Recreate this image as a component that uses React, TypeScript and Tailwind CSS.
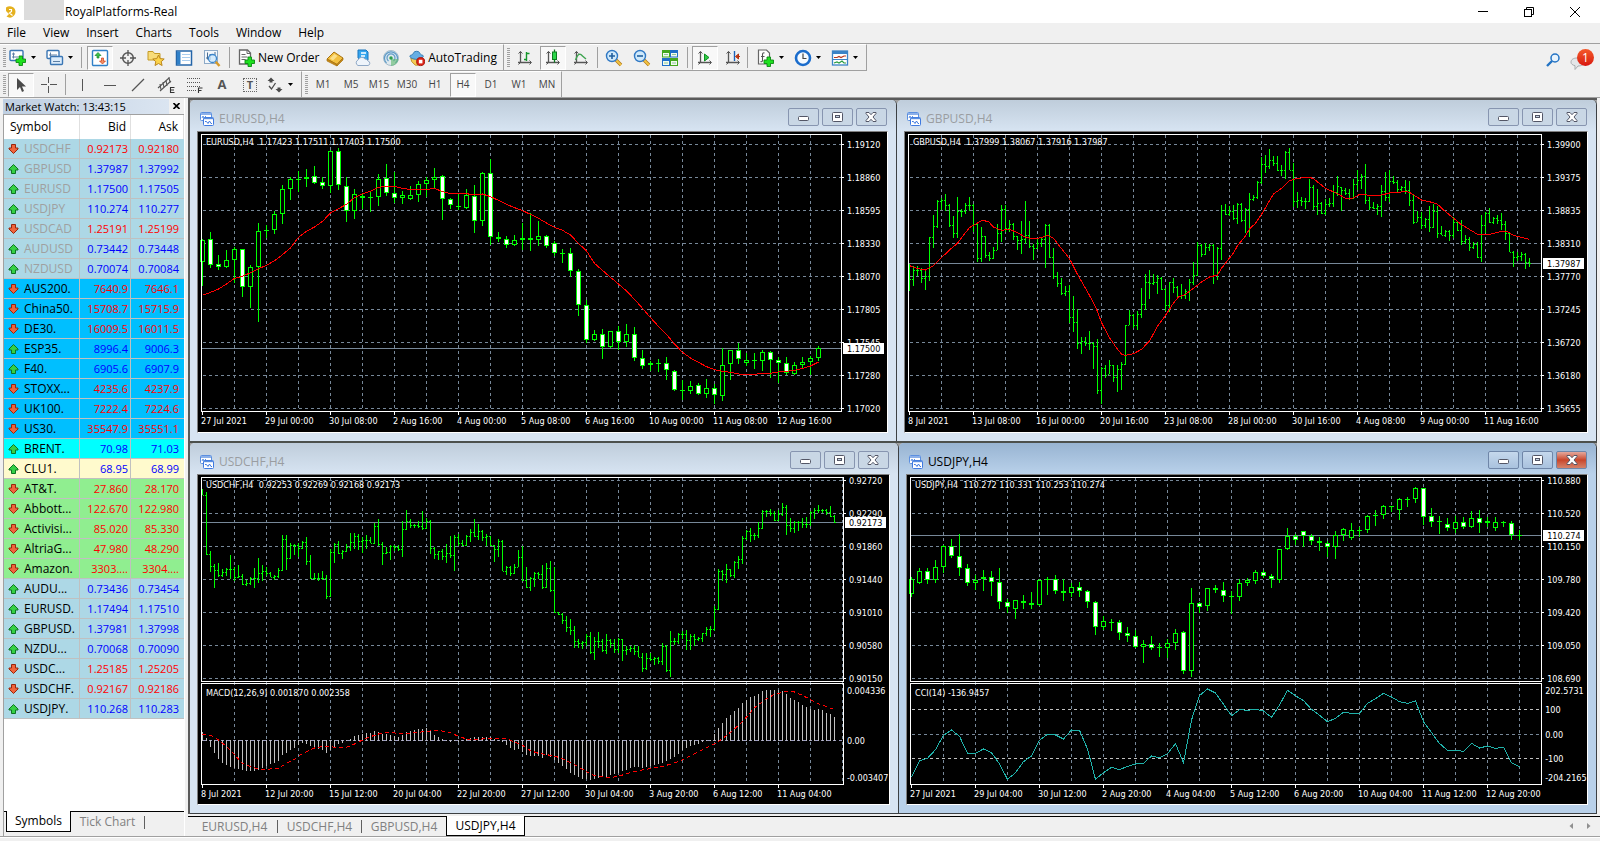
import { ReactNode } from "react";
import clsx from "clsx";

/* ---------- market watch ---------- */

type Quote = [symbol: string, bid: string, ask: string, up: boolean, group: string];

const GROUPS: Record<string, string> = {
  major: "bg-[#add8e6] text-[#a0a0a0]",
  index: "bg-[#00bfff] text-black",
  brent: "bg-[#00ffff] text-black",
  crude: "bg-[#fffacd] text-black",
  stock: "bg-[#90ee90] text-black",
  forex: "bg-[#add8e6] text-black",
};

const QUOTES: Quote[] = [
  ["USDCHF", "0.92173", "0.92180", false, "major"],
  ["GBPUSD", "1.37987", "1.37992", true, "major"],
  ["EURUSD", "1.17500", "1.17505", true, "major"],
  ["USDJPY", "110.274", "110.277", true, "major"],
  ["USDCAD", "1.25191", "1.25199", false, "major"],
  ["AUDUSD", "0.73442", "0.73448", true, "major"],
  ["NZDUSD", "0.70074", "0.70084", true, "major"],
  ["AUS200.", "7640.9", "7646.1", false, "index"],
  ["China50.", "15708.7", "15715.9", false, "index"],
  ["DE30.", "16009.5", "16011.5", false, "index"],
  ["ESP35.", "8996.4", "9006.3", true, "index"],
  ["F40.", "6905.6", "6907.9", true, "index"],
  ["STOXX...", "4235.6", "4237.9", false, "index"],
  ["UK100.", "7222.4", "7224.6", false, "index"],
  ["US30.", "35547.9", "35551.1", false, "index"],
  ["BRENT.", "70.98", "71.03", true, "brent"],
  ["CLU1.", "68.95", "68.99", true, "crude"],
  ["AT&T.", "27.860", "28.170", false, "stock"],
  ["Abbott...", "122.670", "122.980", false, "stock"],
  ["Activisi...", "85.020", "85.330", false, "stock"],
  ["AltriaG...", "47.980", "48.290", false, "stock"],
  ["Amazon.", "3303....", "3304....", false, "stock"],
  ["AUDU...", "0.73436", "0.73454", true, "forex"],
  ["EURUSD.", "1.17494", "1.17510", true, "forex"],
  ["GBPUSD.", "1.37981", "1.37998", true, "forex"],
  ["NZDU...", "0.70068", "0.70090", true, "forex"],
  ["USDC...", "1.25185", "1.25205", false, "forex"],
  ["USDCHF.", "0.92167", "0.92186", false, "forex"],
  ["USDJPY.", "110.268", "110.283", true, "forex"],
];

/* ---------- chart data ---------- */
// All levels run downwards, three units to one pixel.

const nums = (s: string) => s.trim().split(/[\s,]+/).map(Number);

const chunk = (list: number[], size: number) => {
  const out: number[][] = [];
  for (let i = 0; i < list.length; i += size) out.push(list.slice(i, i + size));
  return out;
};

// high, body top, body bottom, low, bearish
const EURUSD = chunk(nums(`
432 437 503 570 0, 413 433 512 516 1, 480 508 518 524 1, 467 496 518 518 0, 456 463 496 563 0, 463 463 578 603 1,
510 516 578 636 0, 384 409 518 678 0, 391 406 409 428 1, 348 358 407 416 0, 270 283 358 384 0, 248 253 283 312 0,
228 253 256 288 0, 222 247 253 273 0, 215 244 266 266 1, 248 262 275 280 1, 165 169 274 291 0, 159 169 272 282 1,
247 274 350 378 1, 282 298 350 369 0, 299 304 311 340 1, 293 307 310 350 0, 237 253 307 330 0, 207 250 296 302 1,
231 294 311 321 1, 288 300 311 325 0, 273 300 314 314 0, 259 268 302 318 0, 247 256 268 304 0, 219 247 257 277 0,
240 244 314 372 1, 310 313 331 341 1, 298 333 338 344 1, 284 300 341 341 0, 270 303 380 413 1, 231 235 380 391 0,
193 235 428 447 1, 411 427 433 438 1, 423 433 452 456 1, 422 436 452 452 0, 384 430 437 462 0, 354 430 437 467 1,
378 424 437 452 0, 420 424 453 458 1, 438 445 476 482 1, 464 474 477 503 0, 459 475 530 545 1, 522 529 632 662 1,
616 631 737 741 1, 705 718 737 737 0, 702 718 758 791 1, 709 709 758 758 0, 694 709 742 762 1, 687 718 742 753 0,
696 718 791 796 1, 766 790 814 819 1, 799 804 811 826 0, 793 804 807 829 0, 786 804 827 852 1, 827 829 887 887 1,
856 886 889 912 0, 858 874 890 896 0, 864 871 899 899 1, 852 880 899 906 0, 868 880 902 926 1, 759 811 903 917 0,
766 766 808 852 0, 744 766 794 806 1, 776 796 806 812 0, 774 796 799 819 0, 766 772 799 825 0, 768 771 796 846 1,
787 796 806 861 1, 786 804 834 837 1, 801 811 838 838 0, 786 801 812 817 0, 784 789 802 837 0, 753 760 789 797 0`), 5);

const EURUSD_MA = nums(`
601 592 582 567 550 544 533 521 511 497 479 459 427 409 396 379 354 341 328 308 296 289 277 274 274 280 284 283 284
280 290 296 296 296 300 297 305 316 328 338 347 358 370 384 397 406 420 445 468 505 526 547 567 588 613 640 668 694
718 747 772 789 802 815 824 829 832 837 839 838 835 835 831 829 826 820 813 801`).map((v, i) => [i * 24, v]);

const USDJPY = chunk(nums(`
411 419 464 470 0, 384 394 431 431 0, 384 394 422 431 1, 361 382 422 428 0, 317 320 382 397 0, 297 318 350 353 1,
283 348 385 405 1, 372 385 431 437 1, 405 422 431 447 0, 391 411 418 450 0, 394 411 428 467 1, 385 428 487 505 1,
477 488 503 517 1, 480 482 507 534 0, 465 484 490 506 1, 458 489 497 505 1, 417 422 496 496 0, 413 418 421 462 0,
405 418 455 460 1, 419 454 461 482 1, 430 443 461 470 0, 428 443 455 470 1, 450 454 488 503 1, 484 487 563 582 1,
528 544 563 568 0, 537 547 550 572 0, 540 546 581 597 1, 563 580 590 605 1, 572 589 623 623 1, 601 612 623 666 0,
588 614 624 629 1, 611 622 625 648 0, 598 611 626 653 0, 567 580 611 627 0, 573 577 695 699 1, 446 490 694 708 0,
487 490 503 516 1, 445 445 500 510 0, 435 445 452 458 1, 426 451 470 485 1, 455 468 471 520 0, 419 430 472 480 0,
415 422 430 436 0, 390 397 424 431 0, 390 397 410 412 1, 403 409 418 443 1, 327 328 422 428 0, 264 290 328 328 0,
284 290 302 313 1, 273 275 290 319 1, 284 289 305 312 1, 293 304 311 332 1, 304 310 322 350 1, 275 287 322 354 0,
264 269 287 301 0, 250 271 295 297 0, 262 270 273 290 0, 226 229 272 276 0, 211 226 229 255 0, 196 200 227 236 0,
198 199 202 215 0, 174 178 212 239 0, 173 177 180 198 0, 142 145 178 188 0, 144 145 233 254 1, 205 229 247 258 1,
230 243 246 279 0, 236 252 266 272 1, 230 247 268 277 0, 232 247 263 266 1, 215 235 263 263 0, 210 235 251 276 1,
232 245 251 260 1, 233 247 266 271 0, 243 247 250 260 0, 245 250 286 298 1, 270 285 288 297 0`), 5);

const USDJPY_CCI = nums(`
1010 962 955 929 886 870 889 940 940 927 938 972 1018 998 965 948 901 883 885 897 870 871 927 1018 998 982 989 979
972 970 948 953 941 911 968 840 767 747 759 793 827 809 811 808 813 832 795 751 767 782 808 826 845 835 817 820 820
790 776 760 771 785 790 783 845 878 910 931 931 934 910 924 918 925 922 968 980`).map((v, i) => [i * 24, v]);

// high, low, close
const GBPUSD = chunk(nums(`
508 590 552, 514 575 527, 514 545 527, 520 566 550, 523 587 545, 427 558 428, 360 461 394, 316 400 319, 311 345 316,
297 350 331, 328 398 391, 365 431 416, 306 430 350, 342 368 349, 324 359 330, 306 350 331, 327 412 388, 386 503 490,
397 501 423, 423 489 482, 472 500 490, 456 494 466, 388 467 415, 331 441 344, 330 413 400, 375 412 388, 384 435 425,
423 465 436, 380 479 433, 318 447 420, 378 461 454, 449 495 461, 433 463 444, 428 458 432, 388 521 391, 389 489 486,
461 554 545, 532 578 566, 549 600 595, 573 603 588, 572 686 667, 603 711 682, 643 762 746, 726 777 740, 727 753 744,
709 766 744, 743 824 753, 732 899 886, 816 929 820, 811 851 840, 795 837 810, 811 863 848, 810 893 822, 801 885 808,
690 811 690, 645 692 660, 657 700 691, 650 707 657, 579 671 628, 537 645 562, 525 614 564, 539 572 562, 540 597 549,
547 586 582, 579 648 632, 561 653 563, 551 596 578, 573 610 604, 568 614 602, 584 614 590, 552 620 562, 501 572 541,
441 545 452, 449 487 477, 445 480 457, 449 470 452, 448 567 542, 458 555 461, 330 497 345, 328 362 358, 333 364 348,
331 375 370, 325 389 328, 325 382 376, 339 416 344, 294 426 312, 300 320 307, 258 312 262, 186 267 208, 180 235 215,
162 222 195, 183 213 206, 184 230 226, 210 243 227, 168 254 171, 159 227 226, 204 338 318, 291 341 315, 306 333 318,
309 344 320, 254 323 277, 270 345 335, 282 362 325, 322 357 354, 314 360 327, 309 338 325, 270 338 292, 243 305 275,
276 350 287, 281 301 294, 282 317 310, 254 312 267, 226 286 256, 237 284 244, 207 329 317, 307 345 338, 321 344 340,
327 360 333, 270 368 290, 231 320 306, 225 321 260, 243 269 261, 255 292 283, 273 293 278, 255 297 286, 258 333 315,
300 389 381, 350 382 367, 352 402 391, 369 400 373, 333 411 396, 327 400 348, 335 429 416, 393 421 420, 405 426 408,
405 438 421, 366 431 382, 379 408 405, 375 452 440, 420 447 432, 426 468 458, 442 464 449, 443 491 488, 360 501 391,
351 414 355, 339 386 382, 367 387 370, 362 388 375, 354 405 387, 378 435 415, 414 473 472, 468 516 488, 473 500 485,
472 498 478, 474 522 501, 489 518 505`), 3);

const GBPUSD_MA = chunk(nums(`
0 512, 24 521, 48 525, 72 512, 96 488, 120 465, 144 445, 156 428, 180 398, 204 384, 219 376, 237 380, 252 396,
276 406, 300 403, 324 413, 348 427, 372 432, 396 428, 414 421, 432 430, 456 461, 480 491, 504 538, 528 580, 552 623,
564 650, 576 683, 600 728, 624 763, 637 778, 648 781, 672 776, 696 763, 720 738, 744 694, 768 661, 792 624, 807 606,
828 598, 852 580, 876 561, 900 546, 924 540, 936 520, 960 489, 972 474, 984 452, 1008 423, 1020 402, 1038 385,
1056 358, 1092 297, 1116 280, 1140 257, 1164 250, 1200 247, 1212 251, 1248 280, 1284 296, 1310 311, 1330 310,
1352 297, 1380 301, 1416 300, 1440 294, 1488 290, 1500 292, 1536 315, 1572 323, 1584 328, 1608 350, 1656 389,
1704 418, 1746 417, 1776 409, 1794 410, 1812 421, 1860 433`), 2);

const USDCHF = chunk(nums(`
147 165 165, 158 347 343, 333 396 379, 372 444 392, 369 411 406, 389 411 398, 384 408 387, 345 417 388, 381 424 412,
375 416 409, 403 437 433, 421 440 430, 411 435 415, 386 446 415, 354 430 401, 375 424 393, 381 409 401, 397 413 411,
405 422 410, 386 414 391, 285 394 298, 285 390 355, 309 358 316, 314 345 315, 309 353 325, 303 329 307, 291 376 363,
345 417 415, 401 422 415, 399 425 415, 393 421 415, 406 479 469, 327 473 337, 309 371 313, 303 343 339, 330 359 334,
312 336 322, 279 334 307, 281 327 289, 283 331 305, 291 341 300, 285 328 302, 293 310 309, 249 313 259, 237 319 313,
306 375 340, 321 343 337, 316 362 320, 316 334 321, 315 333 328, 243 353 267, 210 271 245, 237 265 256, 253 264 257,
244 266 259, 213 272 265, 235 269 243, 240 344 325, 321 359 342, 333 360 335, 329 360 348, 313 371 340, 288 355 345,
285 393 292, 283 319 310, 301 320 316, 286 319 289, 267 308 277, 237 292 290, 253 302 275, 272 305 293, 282 320 290,
288 320 317, 315 368 327, 299 352 304, 302 395 393, 380 406 383, 380 409 400, 374 403 382, 330 383 352, 318 425 421,
383 446 443, 411 453 415, 396 443 400, 396 419 403, 375 447 443, 369 445 385, 363 456 451, 381 520 518, 517 526 522,
519 552 540, 530 577 563, 537 585 571, 560 624 604, 597 625 610, 603 629 606, 582 619 590, 576 642 637, 591 662 604,
576 624 605, 599 638 631, 584 642 600, 597 624 611, 599 640 629, 594 640 599, 597 665 630, 618 645 629, 618 636 625,
615 645 635, 618 653 651, 640 698 685, 639 692 655, 641 664 657, 652 676 655, 653 674 663, 609 676 618, 615 696 690,
573 711 604, 595 615 604, 579 614 582, 573 599 583, 570 630 600, 582 632 588, 582 619 598, 591 604 595, 579 608 580,
561 588 568, 558 593 569, 498 573 508, 387 512 393, 390 424 403, 372 431 388, 387 411 407, 363 416 366, 348 387 358,
288 373 295, 270 300 275, 264 307 285, 279 302 286, 246 295 265, 210 269 213, 211 232 213, 208 228 219, 213 244 240,
210 243 222, 189 229 203, 195 285 256, 236 278 266, 243 279 247, 244 273 246, 236 264 252, 231 266 252, 213 260 218,
204 237 211, 195 220 211, 207 220 211, 208 225 218, 198 233 229, 226 249 247`), 3);

const MACD = nums(`
877 896 918 936 954 966 972 978 983 986 989 992 992 990 988 981 976 971 968 962 944 938 929 922 913 906 909 915 922
926 929 938 928 918 911 907 902 897 889 885 882 880 879 873 877 884 884 887 889 891 886 878 875 872 869 867 866 872
886 893 899 901 905 901 903 901 898 896 893 892 891 891 893 899 901 904 913 921 927 926 933 943 947 946 945 951 944
950 957 968 976 986 996 1004 1010 1015 1016 1017 1015 1012 1009 1008 1003 1000 996 991 987 983 980 980 983 980 977
974 970 967 962 956 950 941 929 921 917 914 910 905 902 901 884 864 849 834 825 814 806 791 780 773 768 764 755 750
750 750 752 754 764 774 781 788 795 803 807 810 809 812 820 822 831`);

const MACD_SIGNAL = chunk(nums(`
0 883, 24 886, 48 900, 60 910, 72 919, 96 944, 120 970, 144 980, 168 987, 192 988, 228 985, 252 970, 276 958,
288 948, 312 935, 336 924, 360 920, 384 920, 408 923, 432 922, 456 912, 480 900, 504 890, 528 882, 552 878, 576 879,
624 880, 672 874, 708 871, 744 878, 768 889, 792 897, 816 899, 852 896, 876 894, 912 895, 936 906, 960 916, 984 932,
1008 940, 1032 944, 1056 948, 1080 956, 1104 968, 1128 981, 1152 995, 1176 1007, 1200 1011, 1224 1013, 1248 1009,
1272 1001, 1308 992, 1344 986, 1380 979, 1410 971, 1440 959, 1476 941, 1524 917, 1548 905, 1584 877, 1620 845,
1656 803, 1692 776, 1716 763, 1752 754, 1776 756, 1800 766, 1824 779, 1848 791, 1896 809`), 2);

/* ---------- chart ---------- */

const LEFT = 4;
const GRID = "#778899";
const LIME = "#00ff00";

const py = (v: number, shift: number) => Math.floor(v / 3) - shift;

const Candles = ({ data, shift }: { data: number[][]; shift: number }) => (
  <g>
    {data.map(([high, top, bottom, low, bear], i) => {
      const x = LEFT + i * 8;
      const t = py(top, shift);
      const h = py(bottom, shift) - t;
      return (
        <g key={i}>
          <rect x={x} y={py(high, shift)} width={1} height={py(low, shift) - py(high, shift) + 1} fill={LIME} />
          <rect x={x - 2} y={t} width={5} height={Math.max(h, 1)} fill={LIME} />
          {h > 2 && <rect x={x - 1} y={t + 1} width={3} height={h - 2} fill={bear ? "#fff" : "#000"} />}
        </g>
      );
    })}
  </g>
);

const Bars = ({ data, shift }: { data: number[][]; shift: number }) => (
  <g fill={LIME}>
    {data.map(([high, low, close], i) => {
      const x = LEFT + i * 4;
      const open = i ? data[i - 1][2] : close;
      const clamped = Math.min(Math.max(open, high), low);
      return (
        <g key={i}>
          <rect x={x} y={py(high, shift)} width={1} height={Math.max(py(low, shift) - py(high, shift), 2)} />
          <rect x={x - 1} y={py(clamped, shift)} width={1} height={1} />
          <rect x={x + 1} y={py(close, shift)} width={1} height={1} />
        </g>
      );
    })}
  </g>
);

interface CurveProps {
  data: number[][];
  shift: number;
  color: string;
  dash?: string;
}

const Curve = ({ data, shift, color, dash }: CurveProps) => (
  <polyline
    points={data.map(([x, y]) => `${LEFT + 0.5 + x / 3},${y / 3 - shift}`).join(" ")}
    fill="none"
    stroke={color}
    strokeWidth={1}
    strokeDasharray={dash}
  />
);

const Histogram = ({ data, zero, shift }: { data: number[]; zero: number; shift: number }) => (
  <g fill="#c0c0c0">
    {data.map((v, i) => {
      const y = py(v, shift);
      return <rect key={i} x={LEFT + i * 4} y={Math.min(y, zero)} width={1} height={Math.abs(y - zero) + 1} />;
    })}
  </g>
);

interface ChartProps {
  caption: string;
  prices: string[];
  firstPrice: number;
  times: string[];
  bid: string;
  bidY: number;
  bottom: number;
  split?: number;
  subCaption?: string;
  subLabels?: [string, number][];
  levels?: [number, string][];
  children: ReactNode;
}

const Chart = (props: ChartProps) => {
  const { caption, prices, firstPrice, times, bid, bidY, bottom, split, subCaption } = props;
  const { subLabels = [], levels = [], children } = props;
  const verticals = Array.from({ length: 60 }, (_, i) => LEFT + 32 * (i + 1));
  return (
    <svg
      role="img"
      aria-label={caption}
      className="block h-full w-full bg-black fill-white font-['DejaVu_Sans_Condensed','Noto_Sans',sans-serif] text-[9px]"
      shapeRendering="crispEdges"
    >
      <g stroke={GRID} strokeDasharray="3 3">
        {verticals.map((x) => (
          <line key={x} x1={x + 0.5} x2={x + 0.5} y1={3} y2={bottom} />
        ))}
        {prices.map((p, i) => (
          <line key={p} x1={5} x2="100%" y1={firstPrice + i * 33 + 0.5} y2={firstPrice + i * 33 + 0.5} />
        ))}
        {levels.map(([y, color]) => (
          <line key={y} x1={5} x2="100%" y1={y + 0.5} y2={y + 0.5} stroke={color} />
        ))}
      </g>
      <line x1={4} x2="100%" y1={bidY + 0.5} y2={bidY + 0.5} stroke={GRID} />
      {children}
      <g stroke="#fff">
        <line x1={3.5} x2={3.5} y1={2} y2={split ?? bottom} />
        <line x1={3} x2="100%" y1={2.5} y2={2.5} />
        <line x1={3} x2="100%" y1={bottom + 0.5} y2={bottom + 0.5} />
        {split && (
          <>
            <line x1={3} x2="100%" y1={split + 0.5} y2={split + 0.5} />
            <line x1={3} x2="100%" y1={split + 2.5} y2={split + 2.5} />
            <line x1={3.5} x2={3.5} y1={split + 2} y2={bottom} />
          </>
        )}
        {times.map((t, i) => (
          <line key={t} x1={LEFT + i * 64 + 0.5} x2={LEFT + i * 64 + 0.5} y1={bottom} y2={bottom + 4} />
        ))}
      </g>
      <text x={8} y={13} xmlSpace="preserve">{caption}</text>
      {subCaption && <text x={8} y={split! + 15}>{subCaption}</text>}
      <svg x="100%" overflow="visible">
        <rect x={-46} y={0} width={46} height={bottom + 2} fill="#000" />
        <rect x={-46} y={2} width={1} height={(split ?? bottom) - 1} />
        {split && <rect x={-46} y={split + 2} width={1} height={bottom - split - 1} />}
        {prices.map((p, i) => (
          <g key={p}>
            <rect x={-45} y={firstPrice + i * 33} width={2} height={1} />
            <text x={-40} y={firstPrice + i * 33 + 4}>{p}</text>
          </g>
        ))}
        {subLabels.map(([label, y]) => (
          <text key={label} x={-42} y={y + 4}>{label}</text>
        ))}
        <rect x={-44} y={bidY - 5} width={41} height={11} />
        <text x={-40} y={bidY + 4} fill="#000">{bid}</text>
      </svg>
      {times.map((t, i) => (
        <text key={t} x={LEFT - 1 + i * 64} y={bottom + 13}>{t}</text>
      ))}
    </svg>
  );
};

/* ---------- child windows ---------- */

const ChartWindowIcon = () => (
  <svg width="14" height="14" viewBox="0 0 14 14" fill="none" aria-hidden="true">
    <rect x="0.5" y="0.5" width="11" height="8" rx="1" fill="#fff" stroke="#5b8fe0" />
    <path d="M1 2h10" stroke="#5b8fe0" strokeWidth="1.4" />
    <path d="M2 6l1-2 1 2 2-2" stroke="#5b8fe0" />
    <rect x="3.5" y="5.5" width="10" height="8" rx="1" fill="#fff" stroke="#3f7ae0" />
    <path d="M4 6.5h9" stroke="#5b8fe0" strokeWidth="1.4" />
    <path d="M5 9.5l1.500 0 1.500 2 1.500-2.500 1.500 2.500h1" stroke="#3f7ae0" />
  </svg>
);

interface ChartWindowProps {
  title: string;
  active?: boolean;
  className: string;
  children: ReactNode;
}

const ChartWindow = ({ title, active, className, children }: ChartWindowProps) => {
  const button = clsx(
    "flex h-[18px] w-[31px] items-center justify-center rounded-[2px] border",
    active ? "border-[#6f86a8] bg-linear-to-b from-[#c5d8ec] to-[#a9c2de]" : "border-[#8795b0] bg-[#c9d7e5]"
  );
  return (
    <section
      className={clsx(
        "flex min-w-0 flex-col rounded-t-[5px] border-r border-[#3c4043] pr-2 pb-2 pl-[7px]",
        active ? "bg-[#b9d1ea]" : "bg-[#d7e4f2]",
        className
      )}
    >
      <header
        className={clsx(
          "-mr-2 -ml-[7px] flex h-[31px] shrink-0 items-center rounded-t-[5px] pr-[9px] pl-[10px]",
          active ? "bg-linear-to-b from-[#98b4d2] to-[#b9d1ea]" : "bg-linear-to-b from-[#bfcddb] to-[#d7e4f2]"
        )}
      >
        <div className="mt-[6px] flex flex-1 items-center gap-[5px]">
          <ChartWindowIcon />
          <h2 className={clsx("text-[12px] leading-4", active ? "text-black" : "text-[#9a9da1]")}>{title}</h2>
        </div>
        <div className="mt-[2px] flex gap-[3px]">
          <button className={button} aria-label={`Minimize ${title}`}>
            <svg width="11" height="11" viewBox="0 0 11 11">
              <rect x="0.5" y="5.5" width="10" height="4" rx="1" fill="#fff" stroke="#535666" />
            </svg>
          </button>
          <button className={button} aria-label={`Maximize ${title}`}>
            <svg width="11" height="10" viewBox="0 0 11 10">
              <rect x="0.5" y="0.5" width="10" height="9" rx="1" fill="#fff" stroke="#535666" />
              <rect x="3.5" y="3.5" width="4" height="2" fill="#c9d7e5" stroke="#535666" />
            </svg>
          </button>
          <button
            className={clsx(
              button,
              active && "border-[#5a1414] bg-linear-to-b from-[#e3a79b] via-[#c8452a] via-50% to-[#d4826a]"
            )}
            aria-label={`Close ${title}`}
          >
            <svg width="12" height="10" viewBox="0 0 12 10">
              <path
                d="M1 0.500h3l2 2.200 2-2.200h3v1L8 5l3 3.500v1H8L6 7.300 4 9.500H1v-1L4 5 1 1.500z"
                fill="#fff"
                stroke="#535666"
              />
            </svg>
          </button>
        </div>
      </header>
      <div className="min-h-0 flex-1 border border-t-[#808080] border-r-white border-b-white border-l-[#808080]">
        {children}
      </div>
    </section>
  );
};

/* ---------- toolbar ---------- */

const Caret = () => (
  <svg width="5" height="3" viewBox="0 0 5 3" aria-hidden="true">
    <path d="M0 0h5L2.500 3z" fill="#000" />
  </svg>
);

const Icon = ({ children, size = 18 }: { children: ReactNode; size?: number }) => (
  <svg width={size} height={size} viewBox="0 0 18 18" fill="none" aria-hidden="true">
    {children}
  </svg>
);

const Plus = ({ x, y }: { x: number; y: number }) => (
  <path
    d={`M${x + 3} ${y}h3.500v3h3v3.500h-3v3h-3.500v-3h-3v-3.500h3z`}
    fill="#1fe01f"
    stroke="#0b8a12"
    strokeWidth="0.9"
  />
);

interface ToolProps {
  label: string;
  pressed?: boolean;
  caret?: boolean;
  children: ReactNode;
}

const Tool = ({ label, pressed, caret, children }: ToolProps) => (
  <button
    aria-label={label}
    className={clsx(
      "flex h-6 shrink-0 items-center",
      pressed && "mx-px w-[26px] justify-center border border-t-[#a0a0a0] border-r-white border-b-white border-l-[#a0a0a0] bg-[#f8f8f8]",
      caret && "w-[37px] gap-1 pl-[2px]",
      !pressed && !caret && "w-7 justify-center"
    )}
  >
    {children}
    {caret && <Caret />}
  </button>
);

const Divider = ({ className }: { className?: string }) => (
  <span className={clsx("h-[21px] w-px shrink-0 bg-[#a0a0a0]", className)} />
);

const Grip = () => (
  <span className="mr-px ml-[3px] flex h-5 w-[3px] shrink-0 flex-col justify-between">
    {Array.from({ length: 10 }, (_, i) => (
      <span key={i} className="h-px w-[3px] bg-[#a0a0a0]" />
    ))}
  </span>
);

const Axes = () => (
  <>
    <path d="M4.500 2.500v11.500M2 13.500h13" stroke="#555" strokeWidth="1.300" />
    <path d="M2.500 4.500l2-2 2 2M13.500 11.500l2 2-2 2M2.500 15.500l2-2" stroke="#555" />
  </>
);

const Lens = ({ minus }: { minus?: boolean }) => (
  <Icon>
    <path d="M11 11l5 5" stroke="#b27a1c" strokeWidth="3.400" />
    <path d="M11 11l5 5" stroke="#f3c544" strokeWidth="1.800" />
    <circle cx="7" cy="7" r="5.500" fill="#cfe9fb" stroke="#2f78c4" strokeWidth="1.400" />
    <path d={minus ? "M4 7h6" : "M4 7h6M7 4v6"} stroke="#22609f" strokeWidth="1.600" />
  </Icon>
);

const MainToolbar = () => (
  <div className="flex h-[28px] items-start border-t border-[#a0a0a0]">
    <div className="flex h-[27px] items-center border-t border-r border-b border-t-white border-r-[#a0a0a0] border-b-[#a0a0a0] pr-[6px]">
      <Grip />
      <Tool label="New chart" caret>
        <Icon>
          <rect x="1" y="1.500" width="13" height="10" rx="1" fill="#fff" stroke="#3a76b4" strokeWidth="1.400" />
          <path d="M4.500 3.500v6M3 5h3M3 8h6" stroke="#5c7fa5" />
          <Plus x={7} y={7} />
        </Icon>
      </Tool>
      <Tool label="Profiles" caret>
        <Icon>
          <rect x="1" y="1.500" width="12" height="8" rx="1" fill="#fff" stroke="#3a76b4" strokeWidth="1.400" />
          <rect x="4.500" y="7.500" width="12" height="8" rx="1" fill="#dcecfb" stroke="#3a76b4" strokeWidth="1.400" />
          <path d="M4.500 3.500v4M3 6h8M7 12.500h7" stroke="#5c7fa5" />
        </Icon>
      </Tool>
      <Divider className="mr-1" />
      <Tool label="Market Watch" pressed>
        <Icon>
          <rect x="1.500" y="1.500" width="15" height="15" rx="1" fill="#fff" stroke="#2f80c8" strokeWidth="1.400" />
          <path d="M7 3.500l3 3H8v2.500H6V6.500H4z" fill="#3fc04b" stroke="#168a28" strokeWidth="0.700" />
          <path d="M11.500 15l3-3h-2V9h-2v3H8.500z" fill="#f29064" stroke="#cf3b14" strokeWidth="0.700" />
        </Icon>
      </Tool>
      <Tool label="Data Window">
        <Icon>
          <circle cx="9" cy="9" r="5.300" stroke="#555" strokeWidth="1.500" />
          <path d="M9 1v6M9 11v6M1 9h6M11 9h6" stroke="#555" strokeWidth="1.300" />
        </Icon>
      </Tool>
      <Tool label="Navigator">
        <Icon>
          <path d="M1 2.500h5l1.500 2H13V11H1z" fill="#f8dc79" stroke="#c49a25" />
          <path d="M11.500 6l1.700 3.600 4 .4-3 2.700.9 3.800-3.600-2-3.500 2 .8-3.800-3-2.700 4-.4z" fill="#fbd34a" stroke="#bb861b" />
        </Icon>
      </Tool>
      <Tool label="Terminal">
        <Icon>
          <rect x="1.500" y="2" width="15" height="14" fill="#fff" stroke="#2465a8" strokeWidth="1.500" />
          <rect x="2" y="2.500" width="3.500" height="13" fill="#2f80c8" />
          <path d="M7 5.500h8M7 8.500h8M7 11.500h8" stroke="#a9cdee" />
        </Icon>
      </Tool>
      <Tool label="Strategy Tester">
        <Icon>
          <rect x="1.500" y="1.500" width="13" height="13" fill="#f4f8fc" stroke="#8eaac7" />
          <path d="M4.500 3.500v7M7.500 5v6M12 3v3M3 9h2M6 6h2" stroke="#4b6d92" />
          <path d="M12.500 12.500l4 4.500" stroke="#d79a2a" strokeWidth="2.500" />
          <circle cx="9.500" cy="9.500" r="4" fill="#cfe9fb" fillOpacity="0.850" stroke="#3c86cc" strokeWidth="1.300" />
        </Icon>
      </Tool>
      <Divider className="mx-[3px]" />
      <button className="flex h-6 w-[88px] items-center gap-[2px] pl-[5px] text-[12px] whitespace-nowrap">
        <Icon>
          <path d="M1.500 1h8l3 3v11h-11z" fill="#fff" stroke="#666" strokeWidth="1.300" />
          <path d="M9 1v3.500h3.500M3.500 5.500h4M3.500 8h6M3.500 10.500h4" stroke="#666" />
          <Plus x={7} y={8} />
        </Icon>
        New Order
      </button>
      <Tool label="MetaEditor">
        <Icon>
          <path d="M1 10l7-7 9 6-6 6.500z" fill="#f3c040" stroke="#a8720f" />
          <path d="M1 10v2l10 5v-1.500zM11 15.500l6-6.500v2l-6 6z" fill="#c98a17" stroke="#a8720f" strokeWidth="0.700" />
          <path d="M4 9.500l4.500-4.500 3 2-4.500 4.500z" fill="#fbe08a" />
        </Icon>
      </Tool>
      <Tool label="VPS">
        <Icon>
          <path d="M4 1h8l2 2v8H6L4 9z" fill="#35a5ee" stroke="#1874bd" />
          <path d="M7 4h5M7 7h4" stroke="#fff" strokeWidth="1.400" />
          <path d="M4 16.500a3 3 0 010-5.500 4 4 0 017-1 3 3 0 013 2 2.300 2.300 0 010 4.500z" fill="#eef4fb" stroke="#8fa8c6" />
        </Icon>
      </Tool>
      <Tool label="Signals">
        <Icon>
          <circle cx="9" cy="9" r="7.500" fill="#dfe9ee" stroke="#a5bccb" />
          <path d="M6.500 12a4 4 0 115 0M4.500 14a6.500 6.500 0 119 0" stroke="#5f9bc8" strokeWidth="1.200" />
          <path d="M9 9v8c4.500-.5 7-3 7.500-7L12 10z" fill="#5fb96c" fillOpacity="0.600" />
          <circle cx="9" cy="9" r="1.700" fill="#2d9e50" />
        </Icon>
      </Tool>
      <button className="flex h-6 w-[92px] items-center gap-[3px] pl-1 text-[12px] whitespace-nowrap">
        <Icon>
          <path d="M2 9h13l-1 4-4 4H7l-4-4z" fill="#f4cc54" stroke="#bb8a20" />
          <path d="M1 7c0-1.500 2-1 3-2s1-3.500 4.500-3.500S12 4 13 5s3 .5 3 2-3 3.500-7.500 3.500S1 8.500 1 7z" fill="#65aee3" stroke="#2b74ad" />
          <circle cx="13" cy="13" r="4.500" fill="#dd2417" stroke="#a31209" />
          <rect x="11" y="11" width="4" height="4" fill="#fff" />
        </Icon>
        AutoTrading
      </button>
    </div>
    <div className="flex h-[27px] items-center border-t border-r border-b border-t-white border-r-[#a0a0a0] border-b-[#a0a0a0]">
      <Grip />
      <Tool label="Bar Chart">
        <Icon>
          <Axes />
          <path d="M10.500 3v9M10.500 4.500h3M8 10.500h2.500" stroke="#15962b" strokeWidth="1.400" />
        </Icon>
      </Tool>
      <Tool label="Candlesticks" pressed>
        <Icon>
          <Axes />
          <path d="M10.500 0.500v13" stroke="#0c7a1e" strokeWidth="1.300" />
          <rect x="8.500" y="3" width="4" height="7.500" fill="#2ad648" stroke="#0c7a1e" />
        </Icon>
      </Tool>
      <Tool label="Line Chart">
        <Icon>
          <Axes />
          <path d="M3.500 11C6 4.500 8 4 10.500 7l3.500 3" stroke="#3fa551" strokeWidth="1.400" />
        </Icon>
      </Tool>
      <Divider className="mx-[2px]" />
      <Tool label="Zoom In">
        <Lens />
      </Tool>
      <Tool label="Zoom Out">
        <Lens minus />
      </Tool>
      <Tool label="Tile Windows">
        <Icon>
          <rect x="1" y="1" width="8" height="7.500" fill="#43a81e" />
          <rect x="9" y="1" width="8" height="7.500" fill="#1f6fc9" />
          <rect x="1" y="9" width="8" height="8" fill="#1f6fc9" />
          <rect x="9" y="9" width="8" height="8" fill="#43a81e" />
          <path d="M2 4h6v3.500H2zM10 4h6v3.500h-6zM2 12h6v4H2zM10 12h6v4h-6z" fill="#f2fbee" />
          <path d="M3 5.500h4M11 5.500h4M3 14h4M11 14h4" stroke="#8ec79a" />
        </Icon>
      </Tool>
      <Divider className="mx-[3px]" />
      <Tool label="Auto Scroll" pressed>
        <Icon>
          <Axes />
          <path d="M8.500 5v7l4.500-3.500z" fill="#2ecb43" stroke="#0d8f22" />
        </Icon>
      </Tool>
      <Tool label="Chart Shift">
        <Icon>
          <Axes />
          <path d="M10.500 2v10" stroke="#1a62b8" strokeWidth="1.400" />
          <path d="M16 7.500h-3M14.500 5l-3 2.500 3 2.500z" fill="#d0431b" stroke="#b4320f" />
        </Icon>
      </Tool>
      <Divider className="mr-[7px]" />
      <Tool label="Indicators" caret>
        <Icon>
          <path d="M1.500 1h8l3 3v11h-11z" fill="#fff" stroke="#666" strokeWidth="1.200" />
          <path d="M7.500 4c-1.500-.5-2 .3-2 1.500v6c0 1-1 1.500-2 1M4 7.500h3.500" stroke="#555" strokeWidth="1.100" />
          <Plus x={7} y={8} />
        </Icon>
      </Tool>
      <Tool label="Periods" caret>
        <Icon>
          <circle cx="9" cy="9" r="7" fill="#f5faff" stroke="#1a6ccc" strokeWidth="2.600" />
          <path d="M9 4.500V9.500h3.500" stroke="#444" strokeWidth="1.200" />
        </Icon>
      </Tool>
      <Tool label="Templates" caret>
        <Icon>
          <rect x="1.500" y="2" width="15" height="14" fill="#fff" stroke="#3a83c6" strokeWidth="1.300" />
          <rect x="1.500" y="2" width="15" height="3" fill="#3a83c6" />
          <path d="M3 8.500h3l2-1 2 1 3-1.500h2" stroke="#b5361c" strokeWidth="1.200" />
          <path d="M2 10.500h14" stroke="#3a83c6" />
          <path d="M3 14l3-1 2 1 3-2 2 2h2" stroke="#2a9c42" strokeWidth="1.200" />
        </Icon>
      </Tool>
    </div>
    <div className="flex flex-1 items-center justify-end gap-[10px] pr-[6px]">
      <button aria-label="Search" className="mt-[3px] flex h-6 items-center">
        <svg width="14" height="14" viewBox="0 0 14 14" fill="none">
          <circle cx="9" cy="5" r="4" fill="#e9f4fd" stroke="#2373c4" strokeWidth="1.500" />
          <path d="M6 8l-5 5" stroke="#2373c4" strokeWidth="2.400" />
        </svg>
      </button>
      <button aria-label="1 new message" className="relative mt-2 h-5 w-[24px]">
        <svg width="16" height="14" viewBox="0 0 16 14" fill="none" className="mt-1">
          <path d="M7 1c4 0 7 1.500 7 4s-2.500 4-6 4l-3 3.500V8.700C2.500 8 1 7 1 5.200 1 2.500 3.500 1 7 1z" fill="#e4e6e8" stroke="#a9adb0" />
        </svg>
        <span className="absolute top-[-3px] right-0 flex size-[17px] items-center justify-center rounded-full bg-linear-to-b from-[#f4582a] to-[#d80f0f] text-[12px] leading-none text-white">
          1
        </span>
      </button>
    </div>
  </div>
);

const PERIODS = ["M1", "M5", "M15", "M30", "H1", "H4", "D1", "W1", "MN"];

const DrawToolbar = () => (
  <div className="flex h-[26px] items-start">
    <div className="flex h-[26px] items-center border-t border-r border-t-white border-r-[#a0a0a0]">
      <Grip />
      <Tool label="Cursor" pressed>
        <Icon>
          <path d="M5 2v12l3-3 2 5 2-1-2-4.500h4z" fill="#4a4a4a" />
        </Icon>
      </Tool>
      <Tool label="Crosshair">
        <Icon>
          <path d="M8.500 1v6M8.500 10v7M1 8.500h6M10 8.500h7" stroke="#555" />
        </Icon>
      </Tool>
      <Divider className="mx-[2px]" />
      <Tool label="Vertical Line">
        <Icon>
          <path d="M9.500 3v12" stroke="#555" />
        </Icon>
      </Tool>
      <Tool label="Horizontal Line">
        <Icon>
          <path d="M3 9.500h12" stroke="#555" />
        </Icon>
      </Tool>
      <Tool label="Trendline">
        <Icon>
          <path d="M3 15L15 3" stroke="#555" strokeWidth="1.200" />
        </Icon>
      </Tool>
      <Tool label="Equidistant Channel">
        <Icon>
          <path d="M1 12L12 2M3 15L14 5M3 8l1 6M6 6l1 6M9 4l1 6M12 1l1 6" stroke="#555" strokeWidth="1.100" />
          <path d="M17.500 11.500h-4v5h4M13.500 14h3.500" stroke="#333" strokeWidth="1.100" />
        </Icon>
      </Tool>
      <Tool label="Fibonacci Retracement">
        <Icon>
          <path d="M2 2.500h14M2 6.500h14M2 10.500h14M2 14.500h9" stroke="#555" strokeDasharray="1 1" />
          <path d="M13.500 17v-5h4M13.500 14.500h3" stroke="#333" strokeWidth="1.100" />
        </Icon>
      </Tool>
      <Tool label="Text">
        <span className="text-[13px] font-bold text-[#555]">A</span>
      </Tool>
      <Tool label="Text Label">
        <span className="flex size-[14px] items-center justify-center border border-dotted border-[#666] text-[11px] leading-none font-bold text-[#555]">
          T
        </span>
      </Tool>
      <Tool label="Arrows" caret>
        <Icon>
          <path d="M5 1.500l3.500 3.500h-2v1.500h-3V5h-2zM13 16.500L9.500 13h2v-1.500h3V13h2z" fill="#4a4a4a" />
          <path d="M3 10l2.500 3 4-6" stroke="#4a4a4a" strokeWidth="1.300" />
        </Icon>
      </Tool>
    </div>
    <div className="flex h-[26px] items-center border-t border-r border-t-white border-r-[#a0a0a0]">
      <Grip />
      {PERIODS.map((p) => (
        <Tool key={p} label={p} pressed={p === "H4"}>
          <span className="text-[10px] text-[#444]">{p}</span>
        </Tool>
      ))}
    </div>
  </div>
);

/* ---------- market watch ---------- */

const Direction = ({ up }: { up: boolean }) => (
  <svg width="11" height="10" viewBox="0 0 11 10" className="shrink-0" aria-hidden="true">
    {up ? (
      <path d="M5.500 0.500L10 5v1H7.500v3.500h-4V6H1V5z" fill="#35cf45" stroke="#0d7420" />
    ) : (
      <path d="M5.500 9.500L10 5V4H7.500V0.500h-4V4H1v1z" fill="#f0643c" stroke="#99260c" />
    )}
  </svg>
);

const MarketWatch = () => (
  <aside className="flex w-[185px] shrink-0 flex-col border-r border-white pl-[3px]">
    <header className="flex h-4 items-center">
      <h2 className="h-[15px] flex-1 bg-linear-to-r from-[#bfcfe2] to-[#dbe5f1] pl-[2px] text-[11px] leading-[15px]">
        Market Watch: 13:43:15
      </h2>
      <button aria-label="Close Market Watch" className="flex w-[15px] justify-center">
        <svg width="7" height="6" viewBox="0 0 7 6">
          <path d="M0.500 0l6 6M6.500 0l-6 6" stroke="#000" strokeWidth="1.600" />
        </svg>
      </button>
    </header>
    <div className="flex min-h-0 flex-1 flex-col border-t border-l border-[#a0a0a0] bg-white">
      <table className="w-full table-fixed border-separate border-spacing-0 text-[11px] leading-[19px]">
        <colgroup>
          <col />
          <col className="w-[51px]" />
          <col className="w-[53px]" />
        </colgroup>
        <thead>
          <tr className="text-[12px]">
            <th className="h-6 border-r border-[#e0e0e0] pb-px pl-[6px] text-left font-normal">Symbol</th>
            <th className="border-r border-[#e0e0e0] pr-1 pb-px text-right font-normal">Bid</th>
            <th className="border-r border-[#e0e0e0] pr-[5px] pb-px text-right font-normal">Ask</th>
          </tr>
        </thead>
        <tbody>
          {QUOTES.map(([symbol, bid, ask, up, group]) => (
            <tr key={symbol} className={GROUPS[group]}>
              <td className="h-5 border-r border-b border-[#c0c0c0] pl-1">
                <span className="flex items-center gap-[5px] text-[12px]">
                  <Direction up={up} />
                  {symbol}
                </span>
              </td>
              <td className={clsx("border-r border-b border-[#c0c0c0] pr-[2px] text-right", up ? "text-[#0000ff]" : "text-[#ff0000]")}>
                {bid}
              </td>
              <td className={clsx("border-b border-[#c0c0c0] pr-[5px] text-right", up ? "text-[#0000ff]" : "text-[#ff0000]")}>
                {ask}
              </td>
            </tr>
          ))}
        </tbody>
      </table>
      <div className="mt-auto flex h-[25px] border-t border-black bg-[#f0f0f0] pl-[2px] text-[12px]">
        <button className="-mt-px h-[21px] w-[65px] border-x border-b border-black bg-white">Symbols</button>
        <button className="h-5 w-[73px] text-[#808080]">Tick Chart</button>
        <span className="mt-1 h-[13px] w-px bg-[#606060]" />
      </div>
    </div>
  </aside>
);

/* ---------- workspace ---------- */

const Workspace = () => (
  <div className="flex min-h-0 flex-1 flex-col border-t-2 border-l-2 border-[#5a5a5a] bg-[#a0a0a0]">
    <div className="flex min-h-0 flex-[343] border-b-2 border-[#4c504c]">
      <ChartWindow title="EURUSD,H4" className="flex-[707]">
        <Chart
          caption="EURUSD,H4  1.17423 1.17511 1.17403 1.17500"
          prices={["1.19120", "1.18860", "1.18595", "1.18330", "1.18070", "1.17805", "1.17545", "1.17280", "1.17020"]}
          firstPrice={12}
          times={["27 Jul 2021", "29 Jul 00:00", "30 Jul 08:00", "2 Aug 16:00", "4 Aug 00:00", "5 Aug 08:00", "6 Aug 16:00", "10 Aug 00:00", "11 Aug 08:00", "12 Aug 16:00"]}
          bid="1.17500"
          bidY={216}
          bottom={279}
        >
          <Candles data={EURUSD} shift={37} />
          <Curve data={EURUSD_MA} shift={37} color="#ff0000" />
        </Chart>
      </ChartWindow>
      <ChartWindow title="GBPUSD,H4" className="flex-[700]">
        <Chart
          caption="GBPUSD,H4  1.37999 1.38067 1.37916 1.37987"
          prices={["1.39900", "1.39375", "1.38835", "1.38310", "1.37770", "1.37245", "1.36720", "1.36180", "1.35655"]}
          firstPrice={12}
          times={["8 Jul 2021", "13 Jul 08:00", "16 Jul 00:00", "20 Jul 16:00", "23 Jul 08:00", "28 Jul 00:00", "30 Jul 16:00", "4 Aug 08:00", "9 Aug 00:00", "11 Aug 16:00"]}
          bid="1.37987"
          bidY={131}
          bottom={279}
        >
          <Bars data={GBPUSD} shift={37} />
          <Curve data={GBPUSD_MA} shift={37} color="#ff0000" />
        </Chart>
      </ChartWindow>
    </div>
    <div className="flex min-h-0 flex-[372] border-b border-[#3c4043]">
      <ChartWindow title="USDCHF,H4" className="flex-[709]">
        <Chart
          caption="USDCHF,H4  0.92253 0.92269 0.92168 0.92173"
          prices={["0.92720", "0.92290", "0.91860", "0.91440", "0.91010", "0.90580", "0.90150"]}
          firstPrice={5}
          times={["8 Jul 2021", "12 Jul 20:00", "15 Jul 12:00", "20 Jul 04:00", "22 Jul 20:00", "27 Jul 12:00", "30 Jul 04:00", "3 Aug 20:00", "6 Aug 12:00", "11 Aug 04:00"]}
          bid="0.92173"
          bidY={47}
          bottom={309}
          split={206}
          subCaption="MACD(12,26,9) 0.001870 0.002358"
          subLabels={[["0.004336", 215], ["0.00", 265], ["-0.003407", 302]]}
          levels={[[265, "#9a9ac0"]]}
        >
          <Bars data={USDCHF} shift={35} />
          <Histogram data={MACD} zero={265} shift={35} />
          <Curve data={MACD_SIGNAL} shift={35} color="#ff0000" dash="4 3" />
        </Chart>
      </ChartWindow>
      <ChartWindow title="USDJPY,H4" active className="flex-[698]">
        <Chart
          caption="USDJPY,H4  110.272 110.331 110.253 110.274"
          prices={["110.880", "110.520", "110.150", "109.780", "109.420", "109.050", "108.690"]}
          firstPrice={5}
          times={["27 Jul 2021", "29 Jul 04:00", "30 Jul 12:00", "2 Aug 20:00", "4 Aug 04:00", "5 Aug 12:00", "6 Aug 20:00", "10 Aug 04:00", "11 Aug 12:00", "12 Aug 20:00"]}
          bid="110.274"
          bidY={60}
          bottom={309}
          split={206}
          subCaption="CCI(14) -136.9457"
          subLabels={[["202.5731", 215], ["100", 234], ["0.00", 259], ["-100", 283], ["-204.2165", 302]]}
          levels={[[234, "#c0c0c0"], [259, GRID], [283, "#c0c0c0"]]}
        >
          <Candles data={USDJPY} shift={35} />
          <Curve data={USDJPY_CCI} shift={35} color="#20b2aa" />
        </Chart>
      </ChartWindow>
    </div>
  </div>
);

const ChartTabs = () => (
  <nav className="mt-[2px] flex h-[20px] items-start border-t border-black text-[12px] text-[#808080]">
    {["EURUSD,H4", "USDCHF,H4", "GBPUSD,H4"].map((tab, i) => (
      <span key={tab} className={clsx("flex h-[19px] items-center", i === 0 ? "w-[90px] pl-1" : "w-[84px]")}>
        <button className="flex-1 text-center leading-[19px]">{tab}</button>
        {i < 2 && <span className="h-[13px] w-px bg-[#606060]" />}
      </span>
    ))}
    <button className="-mt-px h-5 w-[79px] border-x border-b border-black bg-white pt-px leading-[18px] text-black">
      USDJPY,H4
    </button>
    <span className="ml-auto flex h-[18px] items-center gap-[14px] pr-[9px]">
      <button aria-label="Scroll tabs left">
        <svg width="4" height="6" viewBox="0 0 4 6"><path d="M4 0v6L0.500 3z" fill="#909090" /></svg>
      </button>
      <button aria-label="Scroll tabs right">
        <svg width="4" height="6" viewBox="0 0 4 6"><path d="M0 0v6l3.500-3z" fill="#909090" /></svg>
      </button>
    </span>
  </nav>
);

const TitleBar = () => (
  <header className="flex h-[23px] shrink-0 items-center bg-white pr-[2px] pl-[5px]">
    <svg width="11" height="12" viewBox="0 0 11 12" aria-hidden="true">
      <path d="M1 1.500C4-.5 8 0 9.800 3c1.800 3.500 0 7-3 8.300C5 12 3 11.500 1.500 10.500L4 8 1 5z" fill="#e5b11f" />
      <path d="M4 3.500h2.500v2L4.500 7l3 2.500" stroke="#fff" strokeWidth="1.200" fill="none" />
    </svg>
    <span className="mb-[3px] ml-2 h-5 w-10 bg-[#dcdcdc]" />
    <h1 className="ml-px flex-1 text-[12px]">RoyalPlatforms-Real</h1>
    <button aria-label="Minimize" className="flex h-5 w-[46px] items-center justify-center">
      <svg width="10" height="10" viewBox="0 0 10 10"><path d="M0 4.500h10" stroke="#000" /></svg>
    </button>
    <button aria-label="Restore" className="flex h-5 w-[46px] items-center justify-center">
      <svg width="10" height="10" viewBox="0 0 10 10" fill="none" stroke="#000">
        <rect x="0.500" y="2.500" width="7" height="7" />
        <path d="M2.500 2.500v-2h7v7h-2" />
      </svg>
    </button>
    <button aria-label="Close" className="flex h-5 w-[46px] items-center justify-center">
      <svg width="10" height="10" viewBox="0 0 10 10"><path d="M0 0l10 10M10 0L0 10" stroke="#000" /></svg>
    </button>
  </header>
);

const App = () => (
  <div className="flex h-screen flex-col overflow-hidden bg-[#f0f0f0] font-['Open_Sans','Noto_Sans',sans-serif] text-black">
    <TitleBar />
    <nav className="flex h-5 shrink-0 items-center gap-[17px] pl-[7px] text-[12px]">
      {["File", "View", "Insert", "Charts", "Tools", "Window", "Help"].map((item) => (
        <button key={item}>{item}</button>
      ))}
    </nav>
    <MainToolbar />
    <DrawToolbar />
    <main className="flex min-h-0 flex-1 border-t border-b border-[#a0a0a0]">
      <MarketWatch />
      <div className="ml-[3px] flex min-w-0 flex-1 flex-col">
        <div className="mr-[3px] flex min-h-0 flex-1 flex-col">
          <Workspace />
        </div>
        <ChartTabs />
      </div>
    </main>
    <div className="h-1 shrink-0 border-t border-white" />
  </div>
);

export default App;
